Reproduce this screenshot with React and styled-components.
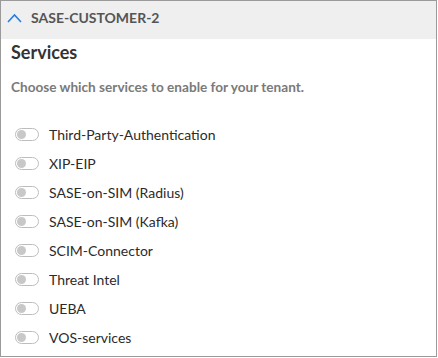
import React from "react";
import styled, { createGlobalStyle } from "styled-components";

const services = [
  "Third-Party-Authentication",
  "XIP-EIP",
  "SASE-on-SIM (Radius)",
  "SASE-on-SIM (Kafka)",
  "SCIM-Connector",
  "Threat Intel",
  "UEBA",
  "VOS-services",
];

const Global = createGlobalStyle`
  body {
    margin: 0;
    background: #fff;
    font-family: Lato, "Liberation Sans", sans-serif;
  }
`;

const Panel = styled.div`
  width: 437px;
  height: 357px;
  box-sizing: border-box;
  border: 1px solid #9a9a9a;
  overflow: hidden;
`;

const Header = styled.div`
  height: 38px;
  background: #efefef;
  display: flex;
  align-items: center;
  padding-left: 6px;
  gap: 9px;
`;

const HeaderTitle = styled.span`
  font-size: 14px;
  font-weight: bold;
  color: #555;
  margin-top: -6px;
`;

const Chevron = styled.svg`
  width: 15px;
  height: 10px;
  margin-top: -4px;
`;

const Body = styled.div`
  padding: 0 10px;
`;

const Title = styled.h2`
  margin: 1px 0 0;
  font-size: 18px;
  font-weight: bold;
  color: #333;
  line-height: 24px;
`;

const Subtitle = styled.p`
  margin: 15px 0 0;
  font-size: 13.6px;
  font-weight: bold;
  color: #7a7a7a;
  line-height: 16px;
`;

const List = styled.div`
  margin-top: 30px;
  display: flex;
  flex-direction: column;
  gap: 11px;
`;

const Row = styled.label`
  display: flex;
  align-items: center;
  height: 18px;
  gap: 10px;
  padding-left: 4px;
`;

const Toggle = styled.span`
  width: 21px;
  height: 11px;
  border: 1px solid #bdbdbd;
  border-radius: 7px;
  display: flex;
  align-items: center;
  padding-left: 1px;
  flex-shrink: 0;
`;

const Knob = styled.span`
  width: 9px;
  height: 9px;
  border-radius: 50%;
  background: #c8c8c8;
`;

const Label = styled.span`
  font-size: 14px;
  color: #2b2b2b;
`;

export default function App() {
  return (
    <>
      <Global />
      <Panel>
        <Header>
          <Chevron viewBox="0 0 15 10">
            <polyline points="1,9 7.5,2 14,9" fill="none" stroke="#2a7de1" strokeWidth="1.6" />
          </Chevron>
          <HeaderTitle>SASE-CUSTOMER-2</HeaderTitle>
        </Header>
        <Body>
          <Title>Services</Title>
          <Subtitle>Choose which services to enable for your tenant.</Subtitle>
          <List>
            {services.map((s) => (
              <Row key={s}>
                <Toggle>
                  <Knob />
                </Toggle>
                <Label>{s}</Label>
              </Row>
            ))}
          </List>
        </Body>
      </Panel>
    </>
  );
}
